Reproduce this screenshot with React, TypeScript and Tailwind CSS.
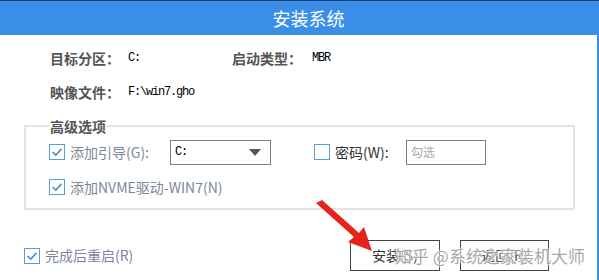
import React from "react";

const CJK = { fontFamily: '"Microsoft YaHei", "Noto Sans CJK SC", "Noto Sans", sans-serif' };
const MONO = { fontFamily: '"Liberation Mono", "Noto Sans CJK SC", monospace' };

function Box({ checked }: { checked: boolean }) {
  return (
    <svg width="16" height="16" viewBox="0 0 16 16" className="shrink-0">
      <rect x="0.5" y="0.5" width="15" height="15" fill="#fff" stroke="#5d9ad9" strokeWidth="1" />
      {checked && (
        <path d="M3.5 8 L6.8 11 L12.5 4.8" fill="none" stroke="#4a8ad6" strokeWidth="1.6" />
      )}
    </svg>
  );
}

export default function App() {
  return (
    <div className="relative w-[599px] h-[280px] overflow-hidden bg-white" style={CJK}>
      <div className="h-[1px] bg-[#1c3e78]" />
      <div className="h-[34px] bg-[#3a8ee8] flex items-center justify-center pl-[18px]">
        <span className="text-white text-[18px] leading-none">安装系统</span>
      </div>
      <div className="h-[245px] border-r-2 border-[#3a8ee8] flex flex-col">
        <div className="flex items-center h-[20px] mt-[13px] pl-[50px]">
          <span className="w-[78px] text-[14px] font-bold text-[#555]">目标分区：</span>
          <span className="w-[104px] text-[12px] tracking-[-1.2px] text-black" style={MONO}>C:</span>
          <span className="w-[80px] text-[14px] font-bold text-[#555]">启动类型：</span>
          <span className="text-[12px] tracking-[-1.2px] text-black" style={MONO}>MBR</span>
        </div>
        <div className="flex items-center h-[20px] mt-[14px] pl-[50px]">
          <span className="w-[78px] text-[14px] font-bold text-[#555]">映像文件：</span>
          <span className="text-[12px] tracking-[-1.2px] text-black" style={MONO}>F:\win7.gho</span>
        </div>
        <fieldset className="mt-[14px] ml-[24px] w-[551px] h-[94px] border-2 border-[#e4e4e4]">
          <legend className="ml-[23px] px-[1px] text-[14px] font-bold text-[#555] leading-[20px]">高级选项</legend>
          <div className="flex items-center h-[24px] mt-[4px] pl-[23px]">
            <Box checked />
            <span className="ml-[5px] w-[100px] text-[14px] text-[#7a8897]">添加引导(G):</span>
            <div className="flex items-center justify-between w-[101px] h-[25px] border border-[#7d7d7d] pl-[4px] pr-[9px]">
              <span className="text-[12px] tracking-[-1.2px] text-black" style={MONO}>C:</span>
              <svg width="12" height="7" viewBox="0 0 12 7"><polygon points="0,0 12,0 6,7" fill="#555" /></svg>
            </div>
            <div className="ml-[43px]"><Box checked={false} /></div>
            <span className="ml-[5px] w-[71px] text-[14px] text-[#333]">密码(W):</span>
            <div className="flex items-center w-[80px] h-[25px] border border-[#7d7d7d] pl-[4px]">
              <span className="text-[12px] text-[#aaa]">勾选</span>
            </div>
          </div>
          <div className="flex items-center h-[24px] mt-[11px] pl-[23px]">
            <Box checked />
            <span className="ml-[5px] text-[14px] text-[#7a8897]">添加NVME驱动-WIN7(N)</span>
          </div>
        </fieldset>
        <div className="flex items-center mt-[30px] pl-[24px] pr-[48px]">
          <Box checked />
          <span className="ml-[5px] text-[14px] text-[#7a8897]">完成后重启(R)</span>
          <div className="ml-auto flex gap-[20px]">
            <div className="w-[90px] h-[31px] border border-[#444] flex items-center justify-center text-[14px] text-[#333]">安装(S)</div>
            <div className="w-[89px] h-[31px] border border-[#444] flex items-center justify-center text-[14px] text-[#333]">返回(R)</div>
          </div>
        </div>
      </div>
      <div
        className="absolute left-[395px] top-[243px] text-[17px] text-[#a8a8a8] whitespace-nowrap pointer-events-none"
        style={{ textShadow: "0 0 2px #fff, 0 0 2px #fff, 0 0 3px #fff" }}
      >
        知乎 @系统之家装机大师
      </div>
      <svg className="absolute left-0 top-0" width="599" height="280" viewBox="0 0 599 280">
        <polygon points="316,203 322,200 359,233 364,227 372,251 348,242 354,237" fill="#e8231e" />
      </svg>
    </div>
  );
}
